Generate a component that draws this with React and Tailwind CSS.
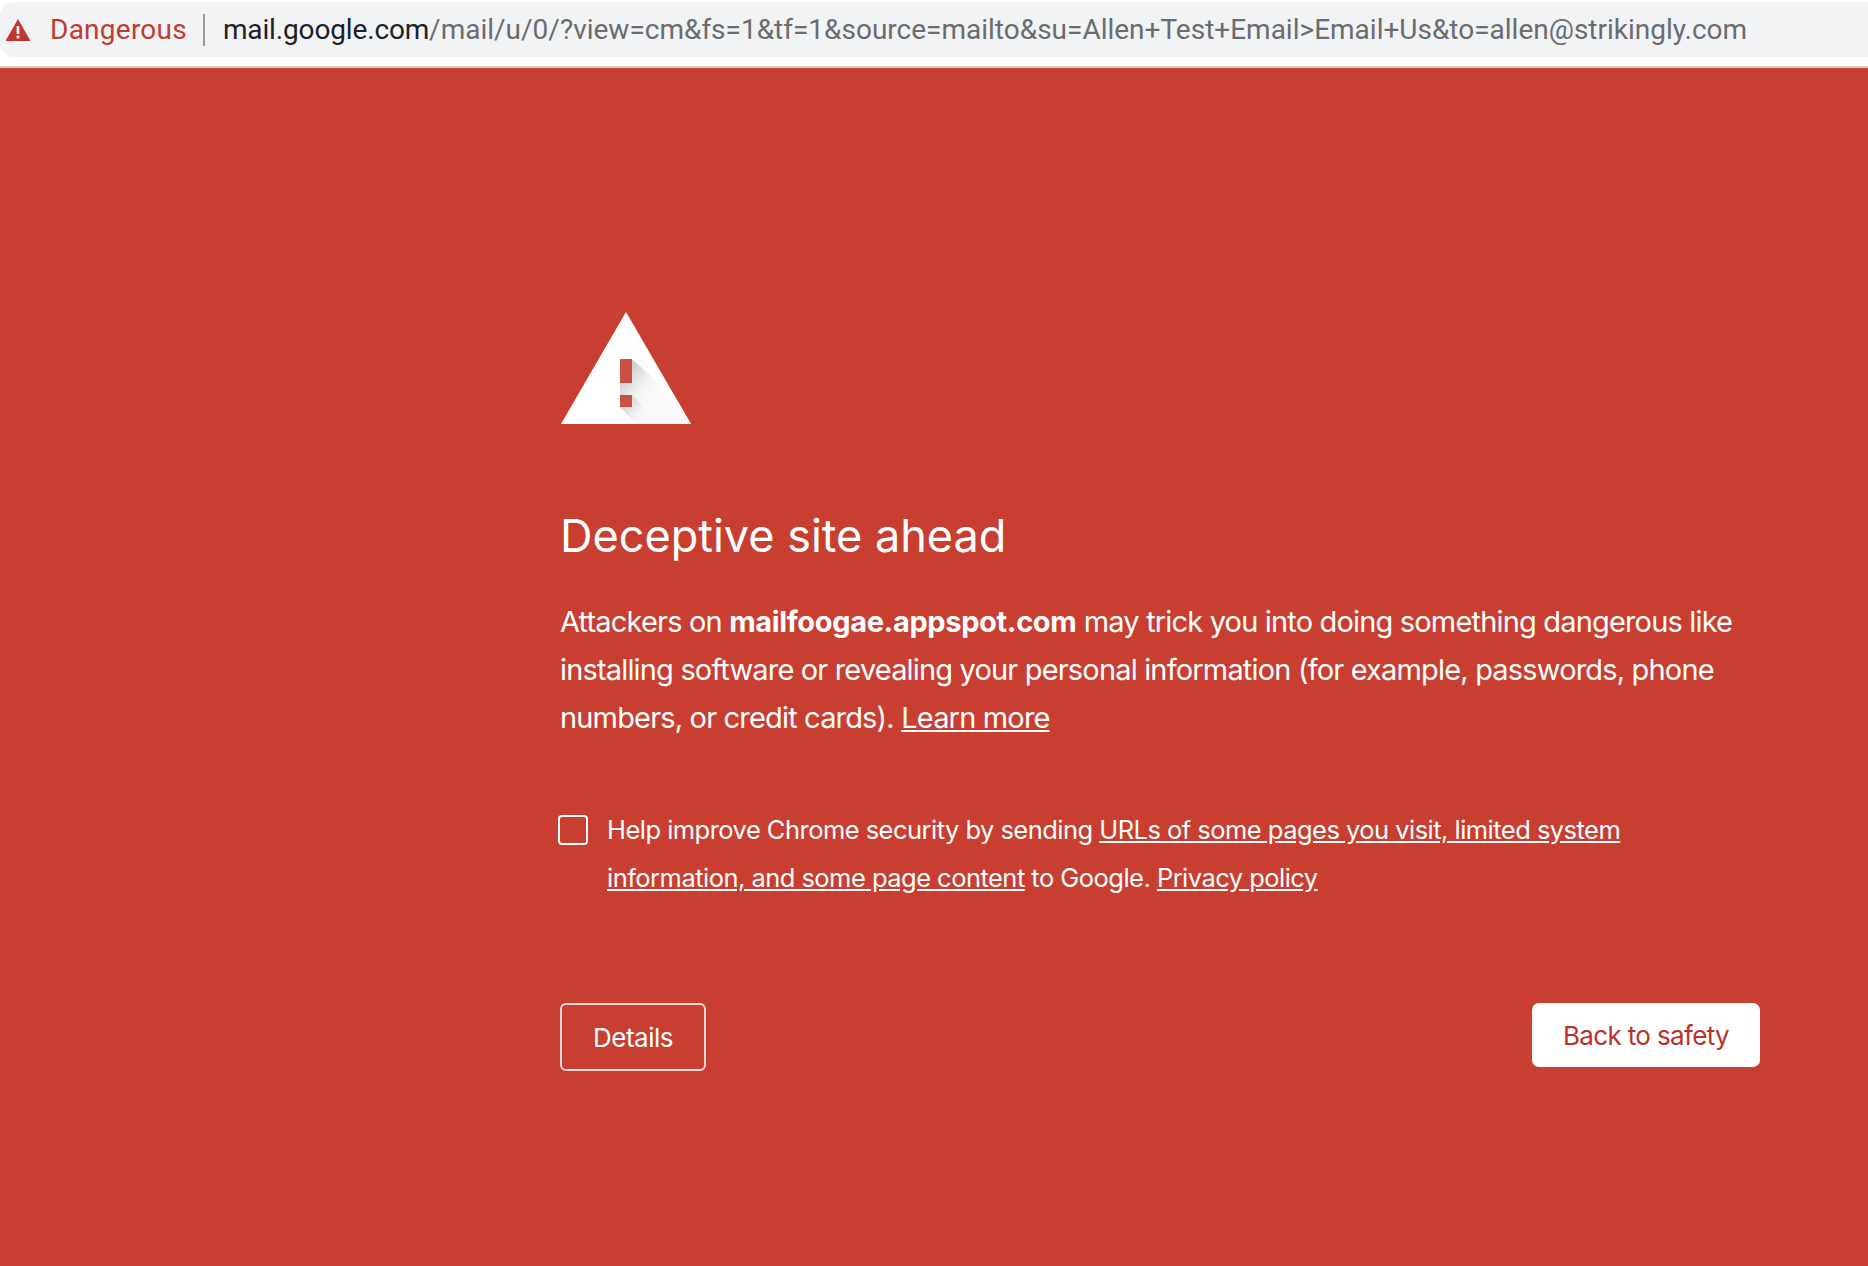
import React from "react";

function WarningIcon() {
  return (
    <svg width="130" height="112" viewBox="0 0 130 112" className="block">
      <defs>
        <clipPath id="tri"><polygon points="65,0 130,112 0,112" /></clipPath>
        <linearGradient id="sh" gradientUnits="userSpaceOnUse" x1="68" y1="60" x2="94" y2="82">
          <stop offset="0" stopColor="#d2d2d2" />
          <stop offset="0.6" stopColor="#f4f4f4" />
          <stop offset="1" stopColor="#fafafa" />
        </linearGradient>
        <linearGradient id="sh2" gradientUnits="userSpaceOnUse" x1="64" y1="90" x2="84" y2="106">
          <stop offset="0" stopColor="#d2d2d2" />
          <stop offset="0.65" stopColor="#f4f4f4" />
          <stop offset="1" stopColor="#fafafa" />
        </linearGradient>
      </defs>
      <polygon points="65,0 130,112 0,112" fill="#ffffff" />
      <g clipPath="url(#tri)">
        <polygon points="71,47 118,90 130,112 76,112 59,95 59,71" fill="url(#sh)" />
        <polygon points="71,83 100,112 76,112 59,95" fill="url(#sh2)" />
      </g>
      <rect x="59" y="47" width="12" height="24" fill="#cb5044" />
      <rect x="59" y="83" width="12" height="12" fill="#cb5044" />
    </svg>
  );
}

function UrlBar() {
  return (
    <div className="bg-white h-[68px] pt-[2px] border-b-[2px] border-[#d0d0d0]">
      <div className="h-[55px] pt-[1px] bg-[#f1f3f4] rounded-l-[14px] flex items-center font-['Roboto',sans-serif] text-[28px] whitespace-nowrap">
        <svg width="26" height="24" viewBox="0 0 26 24" className="ml-[5px] -mt-[1px] shrink-0">
          <path d="M13 1 L25.5 23 H0.5 Z" fill="#c0392f" />
          <rect x="11.6" y="8" width="2.8" height="8" fill="#f1f3f4" />
          <rect x="11.6" y="17.6" width="2.8" height="2.8" fill="#f1f3f4" />
        </svg>
        <span className="ml-[19px] tracking-[0.25px] text-[#c23b30]">Dangerous</span>
        <span className="ml-[16px] -mt-[1px] w-[2px] h-[32px] bg-[#9a9a9a]" />
        <span className="ml-[18px] tracking-[-0.15px] text-[#202124]">mail.google.com</span>
        <span className="text-[#6b6c6f]">/mail/u/0/?view=cm&amp;fs=1&amp;tf=1&amp;source=mailto&amp;su=Allen+Test+Email&gt;Email+Us&amp;to=allen@strikingly.com</span>
      </div>
    </div>
  );
}

export default function App() {
  return (
    <div className="h-[1266px] w-[1868px] overflow-hidden bg-[#c83f31] font-['Inter',sans-serif] text-white">
      <UrlBar />
      <main className="ml-[560px] w-[1200px] pt-[244px]">
        <div className="ml-[1px]"><WarningIcon /></div>
        <h1 className="mt-[82px] text-[45px] leading-[60px] font-normal">Deceptive site ahead</h1>
        <p className="mt-[32px] text-[29px] leading-[48px] tracking-[-0.83px]">
          Attackers on <strong className="font-bold tracking-[-0.35px]">mailfoogae.appspot.com</strong> may trick you into doing something dangerous like installing software or revealing your personal information (for example, passwords, phone numbers, or credit cards). <a className="underline">Learn more</a>
        </p>
        <div className="mt-[64px] flex items-start -ml-[2px]">
          <span className="mt-[9px] w-[30px] h-[30px] shrink-0 rounded-[4px] border-2 border-white" />
          <p className="ml-[19px] text-[25.5px] leading-[48px] tracking-[-0.53px]">
            Help improve Chrome security by sending <a className="underline">URLs of some pages you visit, limited system information, and some page content</a> to Google. <a className="underline">Privacy policy</a>
          </p>
        </div>
        <div className="mt-[101px] flex justify-between items-start">
          <button className="w-[146px] h-[68px] rounded-[6px] border-2 border-white/80 text-[26px] tracking-[-0.5px] text-white">Details</button>
          <button className="w-[228px] h-[64px] rounded-[7px] bg-white text-[26px] tracking-[-0.65px] text-[#b8322a]">Back to safety</button>
        </div>
      </main>
    </div>
  );
}
